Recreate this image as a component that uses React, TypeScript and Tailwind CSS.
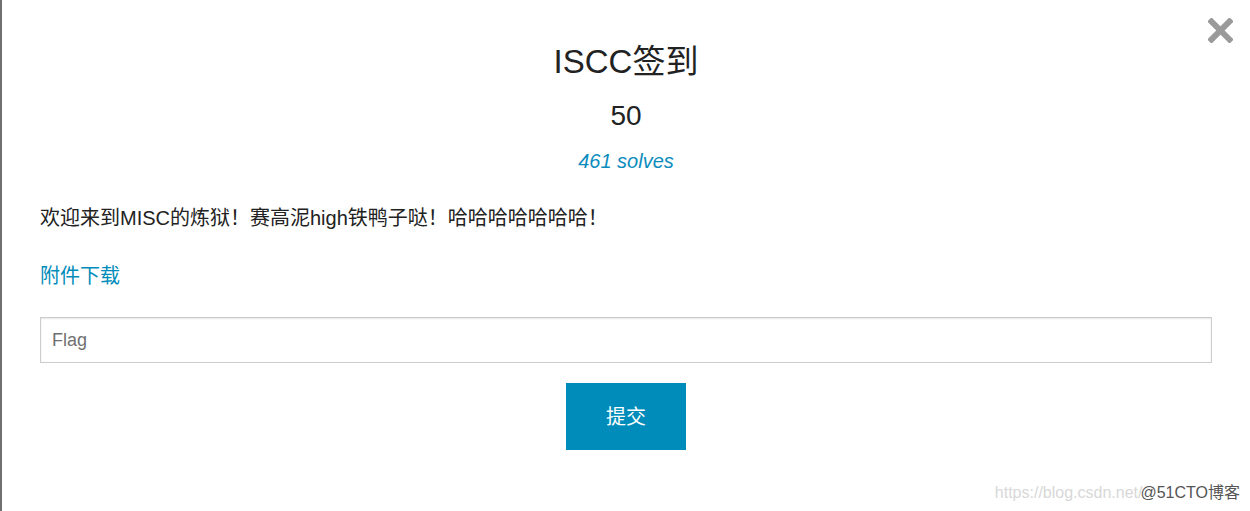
import React from "react";

const font = { fontFamily: '"Liberation Sans", Arial, "Noto Sans CJK SC", sans-serif' };

export default function App() {
  return (
    <div
      className="relative w-[1250px] h-[511px] bg-white border-l-2 border-[#707070] px-[38px] overflow-hidden text-[#222222]"
      style={font}
    >
      <button className="absolute right-[17px] top-[18px] w-[25px] h-[25px]" aria-label="close">
        <svg viewBox="0 0 25 25" width="25" height="25">
          <path d="M3.5 3.5 L21.5 21.5 M21.5 3.5 L3.5 21.5" stroke="#9a9a9a" strokeWidth="6" strokeLinecap="square" />
        </svg>
      </button>

      <div className="pt-[42px] flex flex-col items-center">
        <h2 className="text-[33px] leading-[40px] text-[#222222]">ISCC签到</h2>
        <div className="mt-[16px] text-[28px] leading-[36px] text-[#222222]">50</div>
        <div className="mt-[13px] text-[20px] leading-[28px] italic text-[#0c8cbd]">461 solves</div>
      </div>

      <p className="mt-[29px] text-[20px] leading-[28px] text-[#222222]">
        欢迎来到MISC的炼狱！赛高泥high铁鸭子哒！哈哈哈哈哈哈哈！
      </p>
      <a className="block mt-[30px] text-[20px] leading-[28px] text-[#008cba] w-fit">附件下载</a>

      <input
        className="mt-[27px] block w-full h-[46px] border border-[#cccccc] bg-white px-[11px] text-[18px] text-[#222222] placeholder:text-[#707070] shadow-[inset_0_1px_2px_rgba(0,0,0,0.1)] outline-none"
        placeholder="Flag"
        style={font}
      />

      <div className="mt-[20px] flex justify-center">
        <button className="w-[120px] h-[67px] bg-[#008cba] text-white text-[20px]" style={font}>
          提交
        </button>
      </div>

      <div className="absolute right-[10px] bottom-[8px] text-[16px] leading-[20px] flex items-center">
        <span className="text-[#d8d8d8]">https://blog.csdn.net/</span>
        <span className="-ml-[2px] text-[#555555]">@51CTO博客</span>
      </div>
    </div>
  );
}
